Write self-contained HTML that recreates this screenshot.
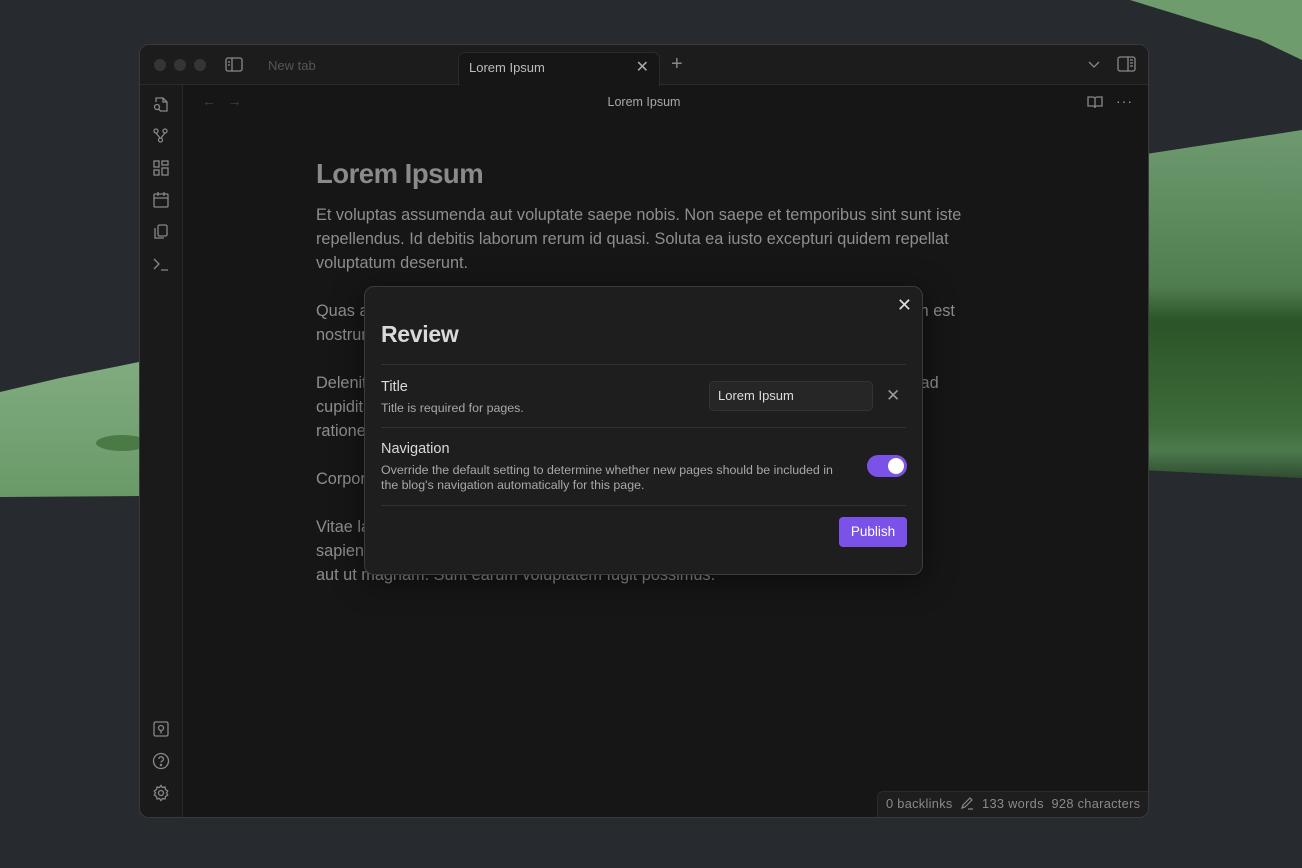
<!DOCTYPE html>
<html><head><meta charset="utf-8"><style>
*{box-sizing:border-box;margin:0;padding:0}
body{width:1302px;height:868px;overflow:hidden;background:#272b30;font-family:"Liberation Sans",sans-serif;position:relative}
.bg{position:absolute;left:0;top:0}
.win{position:absolute;left:139px;top:44px;width:1010px;height:774px;background:#161616;border:1px solid #3a3a3a;border-radius:10px;overflow:hidden}
.tabbar{position:absolute;left:0;top:0;width:100%;height:40px;background:#1c1c1c;border-bottom:1px solid #2a2a2a}
.dot{position:absolute;top:14px;width:12px;height:12px;border-radius:50%;background:#353535}
.tab{position:absolute;top:7px;height:34px;font-size:13px;color:#555;line-height:30px}
.tab.act{left:318px;width:202px;background:#161616;border:1px solid #2a2a2a;border-bottom:none;border-radius:7px 7px 0 0;color:#bdbdbd;padding-left:10px}
.side{position:absolute;left:0;top:40px;width:43px;bottom:0;background:#1a1a1a;border-right:1px solid #2a2a2a}
.ic{position:absolute;left:12px}
.title{position:absolute;left:0;right:0;top:50px;text-align:center;font-size:12.5px;color:#a8a8a8}
.doc{position:absolute;left:176px;top:108px;width:720px;color:#8e8e8e;font-size:16.3px;line-height:24px}
.doc h1{font-size:27.5px;color:#8a8a8a;font-weight:bold;letter-spacing:-0.5px;height:50px;line-height:42px}
.doc p{margin-bottom:24px;white-space:nowrap}
.status{position:absolute;right:0;bottom:0;height:26px;width:271px;background:#1e1e1e;border:1px solid #2c2c2c;border-right:none;border-bottom:none;border-radius:6px 0 0 0;font-size:12.8px;color:#8a8a8a;line-height:24px;padding-left:8px;white-space:nowrap;letter-spacing:0.3px}
.modal{position:absolute;left:364px;top:286px;width:559px;height:289px;background:#1e1e1e;border:1px solid #3c3c3c;border-radius:10px;box-shadow:0 6px 30px rgba(0,0,0,.5)}
.modal h2{position:absolute;left:16px;top:34px;font-size:23px;color:#dadada;font-weight:bold;letter-spacing:-0.3px}
.hr{position:absolute;left:16px;right:16px;height:1px;background:#323232}
.lbl{position:absolute;left:16px;font-size:14.5px;color:#dadada}
.desc{position:absolute;left:16px;font-size:12.4px;color:#a8a8a8;line-height:15px;white-space:nowrap}
</style></head><body>
<svg class="bg" width="1302" height="868">
<defs>
<linearGradient id="g1" x1="0" y1="0" x2="0" y2="1"><stop offset="0" stop-color="#6f9a70"/><stop offset=".45" stop-color="#4f7d50"/><stop offset=".55" stop-color="#2b5428"/><stop offset=".85" stop-color="#3e6c3a"/><stop offset=".92" stop-color="#4d7a4d"/><stop offset="1" stop-color="#2f4d30"/></linearGradient>
<linearGradient id="g2" x1="0" y1="0" x2="0" y2="1"><stop offset="0" stop-color="#80ab80"/><stop offset="1" stop-color="#6a9a68"/></linearGradient>
</defs>
<polygon points="1130,0 1302,0 1302,60 1260,40" fill="#6f9c6c"/>
<polygon points="1140,155 1302,130 1302,478 1140,470" fill="url(#g1)"/>
<polygon points="0,392 60,378 139,362 139,496 0,497" fill="url(#g2)"/>
<ellipse cx="122" cy="443" rx="26" ry="8" fill="#4a7a45"/>
</svg>
<div class="win">
 <div class="tabbar">
  <div class="dot" style="left:14px"></div><div class="dot" style="left:34px"></div><div class="dot" style="left:54px"></div>
  <svg style="position:absolute;left:85px;top:12px" width="18" height="16" fill="none" stroke="#888" stroke-width="1.3"><rect x="1" y="1" width="16" height="13" rx="2"/><line x1="7" y1="1" x2="7" y2="14"/><line x1="3" y1="5" x2="5" y2="5"/><line x1="3" y1="8" x2="5" y2="8"/></svg>
  <div class="tab" style="left:128px;top:6px">New tab</div>
  <div class="tab act">Lorem Ipsum<span style="position:absolute;right:10px;top:0;font-size:16px;color:#aaa">✕</span></div>
  <div style="position:absolute;left:531px;top:8px;font-size:20px;color:#888">+</div>
  <svg style="position:absolute;left:948px;top:14px" width="12" height="10" fill="none" stroke="#888" stroke-width="1.3"><path d="M1 3l5 5 5-5"/></svg>
  <svg style="position:absolute;left:977px;top:11px" width="19" height="16" fill="none" stroke="#888" stroke-width="1.3"><rect x="1" y="1" width="17" height="14" rx="2"/><line x1="11" y1="1" x2="11" y2="15"/><line x1="13" y1="4" x2="16" y2="4"/><line x1="13" y1="7" x2="16" y2="7"/><line x1="13" y1="10" x2="16" y2="10"/></svg>
 </div>
 <div class="side">
  <svg class="ic" style="top:10px" width="18" height="18" fill="none" stroke="#888" stroke-width="1.3"><path d="M4 7V3h7l4 4v9H8M11 3v4h4"/><circle cx="5" cy="12" r="2.5"/><path d="M6.5 14l2 2"/></svg>
  <svg class="ic" style="top:42px" width="18" height="18" fill="none" stroke="#888" stroke-width="1.3"><circle cx="4" cy="4" r="2"/><circle cx="13" cy="4" r="2"/><circle cx="8.5" cy="13" r="2"/><path d="M4 6l4 5M13 6l-4 5"/></svg>
  <svg class="ic" style="top:74px" width="18" height="18" fill="none" stroke="#888" stroke-width="1.3"><rect x="2" y="2" width="5" height="6"/><rect x="10" y="2" width="6" height="4"/><rect x="2" y="11" width="5" height="5"/><rect x="10" y="9" width="6" height="7"/></svg>
  <svg class="ic" style="top:106px" width="18" height="18" fill="none" stroke="#888" stroke-width="1.3"><rect x="2" y="3" width="14" height="13" rx="1"/><path d="M2 7h14M6 1v4M12 1v4"/></svg>
  <svg class="ic" style="top:138px" width="18" height="18" fill="none" stroke="#888" stroke-width="1.3"><rect x="6" y="2" width="9" height="11" rx="1.5"/><path d="M3 5v10h9"/></svg>
  <svg class="ic" style="top:170px" width="18" height="18" fill="none" stroke="#888" stroke-width="1.3"><path d="M2 4l5 5-5 5M9 15h7"/></svg>
  <svg class="ic" style="top:635px" width="18" height="18" fill="none" stroke="#888" stroke-width="1.3"><rect x="2" y="2" width="14" height="14" rx="1.5"/><circle cx="9" cy="8" r="2.5"/><path d="M9 10.5v3"/></svg>
  <svg class="ic" style="top:667px" width="18" height="18" fill="none" stroke="#888" stroke-width="1.3"><circle cx="9" cy="9" r="7.5"/><path d="M6.8 7a2.3 2.3 0 1 1 3 2.2c-.6.3-.8.7-.8 1.3"/><circle cx="9" cy="13" r=".6" fill="#888"/></svg>
  <svg class="ic" style="top:699px" width="18" height="18" fill="none" stroke="#888" stroke-width="1.3"><circle cx="9" cy="9" r="2.5"/><path d="M9 1.5l1.5 2 2.5-.5.5 2.5 2.2 1.5-1.2 2 1.2 2-2.2 1.5-.5 2.5-2.5-.5L9 16.5l-1.5-2-2.5.5-.5-2.5L2.3 11l1.2-2-1.2-2 2.2-1.5.5-2.5 2.5.5z"/></svg>
 </div>
 <div style="position:absolute;left:62px;top:48px;font-size:14px;color:#444">←&nbsp;&nbsp;&nbsp;→</div>
 <div class="title">Lorem Ipsum</div>
 <svg style="position:absolute;left:947px;top:50px" width="16" height="14" fill="none" stroke="#888" stroke-width="1.3"><path d="M1 2h5a2 2 0 0 1 2 2v9a2 2 0 0 0-2-2H1zM15 2h-5a2 2 0 0 0-2 2v9a2 2 0 0 1 2-2h5z"/></svg>
 <div style="position:absolute;left:976px;top:48px;font-size:14px;color:#999;letter-spacing:1px">···</div>
 <div class="doc">
  <h1>Lorem Ipsum</h1>
  <p>Et voluptas assumenda aut voluptate saepe nobis. Non saepe et temporibus sint sunt iste<br>repellendus. Id debitis laborum rerum id quasi. Soluta ea iusto excepturi quidem repellat<br>voluptatum deserunt.</p>
  <p>Quas aut ut cumque voluptatem sit adipisci nam consequatur occaecati, praesentium est<br>nostrum quia corporis ullam necessitatibus.</p>
  <p>Deleniti et aut dolorem nihil vero quas commodi voluptatem molestiae, consequatur ad<br>cupiditate nemo est delectus reiciendis sed aspernatur mollitia quo incidunt<br>ratione et quos eos.</p>
  <p>Corporis eum quo saepe velit quae aliquid impedit ut dicta voluptatem.</p>
  <p>Vitae laudantium numquam omnis dolorum ut velit molestias eos natus. Et libero<br>sapiente iure ipsa occaecati molestiae qui quis perferendis recusandae quia<br>aut ut magnam. Sunt earum voluptatem fugit possimus.</p>
 </div>
 <div class="status">0 backlinks &nbsp;<svg width="14" height="14" style="vertical-align:-2px" fill="none" stroke="#888" stroke-width="1.2"><path d="M2 12l1-3 7-7 2 2-7 7zM8 13h5"/></svg>&nbsp; 133 words &nbsp;928 characters</div>
</div>
<div class="modal">
 <div style="position:absolute;right:10px;top:8px;font-size:18px;color:#ddd">✕</div>
 <h2>Review</h2>
 <div class="hr" style="top:77px"></div>
 <div class="lbl" style="top:92px">Title</div>
 <div class="desc" style="top:114px">Title is required for pages.</div>
 <div style="position:absolute;left:344px;top:94px;width:164px;height:30px;background:#262626;border:1px solid #333;border-radius:5px;font-size:13px;color:#ddd;line-height:28px;padding-left:8px">Lorem Ipsum</div>
 <div style="position:absolute;left:521px;top:99px;font-size:17px;color:#999">✕</div>
 <div class="hr" style="top:140px"></div>
 <div class="lbl" style="top:154px">Navigation</div>
 <div class="desc" style="top:176px">Override the default setting to determine whether new pages should be included in<br>the blog's navigation automatically for this page.</div>
 <div style="position:absolute;left:502px;top:168px;width:40px;height:22px;border-radius:11px;background:#7a52e8"><div style="position:absolute;right:3px;top:3px;width:16px;height:16px;border-radius:50%;background:#fff"></div></div>
 <div class="hr" style="top:218px"></div>
 <div style="position:absolute;left:474px;top:230px;width:68px;height:30px;background:#7a52e8;border-radius:4px;color:#fff;font-size:13.5px;line-height:30px;text-align:center">Publish</div>
</div>
</body></html>
